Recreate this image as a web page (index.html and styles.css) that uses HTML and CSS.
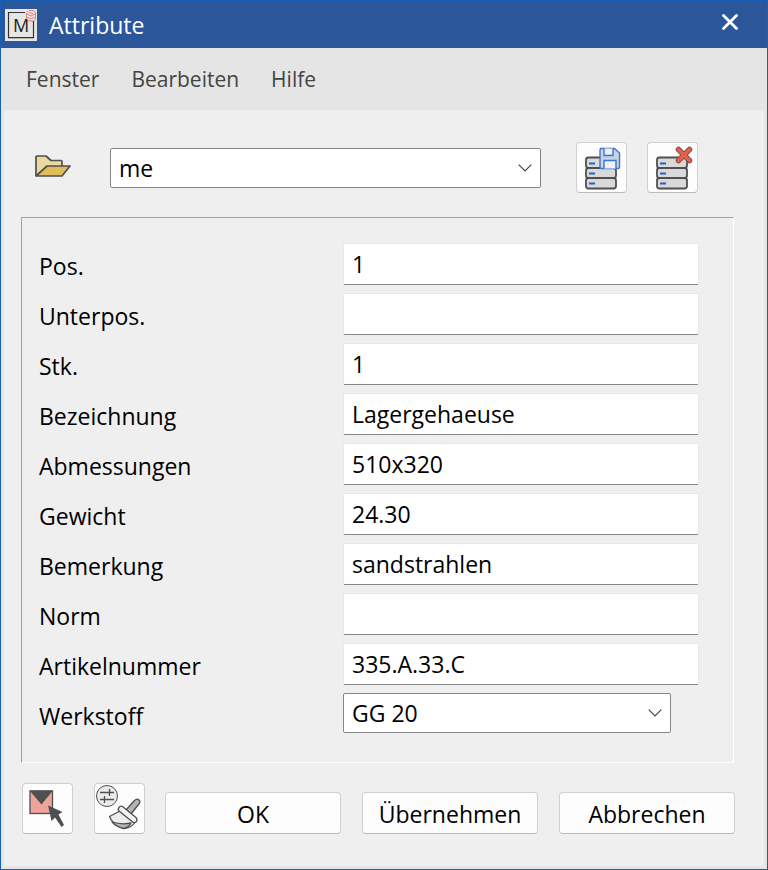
FILE: index.html
```html
<!DOCTYPE html>
<html lang="de">
<head>
<meta charset="utf-8">
<meta name="viewport" content="width=device-width, initial-scale=1">
<title>Attribute</title>
<link rel="stylesheet" href="styles.css">
</head>
<body>
<div class="window">
  <header class="titlebar">
    <svg class="app-icon" viewBox="0 0 32 32" aria-hidden="true">
      <rect width="32" height="32" fill="#e6e6e4"/>
      <path d="M3 29.500H29" stroke="#b5b5b3" stroke-width="1"/>
      <path d="M20 3.500H3.500V28.500H28.500V12" fill="none" stroke="#333" stroke-width="1.200"/>
      <text class="app-letter" x="16" y="23" text-anchor="middle">M</text>
      <path d="M21.500 4 24 1.500H28.500L30.500 4V10L28.500 12H24L21.500 10ZM22 5l4 2 4-2M22 8l4 2 4-2M24 3.500l4 1" fill="none" stroke="#df7777" stroke-width="0.900"/>
    </svg>
    <h1 class="title">Attribute</h1>
    <button class="close" type="button" aria-label="Schließen">
      <svg viewBox="0 0 16 16" width="16" height="16"><path d="M1.500 1.500 14.500 14.500M14.500 1.500 1.500 14.500" stroke="#fff" stroke-width="2.800" stroke-linecap="round"/></svg>
    </button>
  </header>
  <nav class="menubar">
    <button type="button">Fenster</button>
    <button type="button">Bearbeiten</button>
    <button type="button">Hilfe</button>
  </nav>
  <form class="content">
    <div class="toolbar">
      <button class="folder" type="button" aria-label="Öffnen">
        <svg viewBox="0 0 38 24" width="38" height="24" stroke="#4d4f50" stroke-width="1.700" stroke-linejoin="round">
          <path d="M2 21V3Q2 2 3 2H12L17 6.500H27Q28 6.500 28 7.500V13L26 21Z" fill="#ecd99f"/>
          <path d="M2 22 13 12H36L28 22Z" fill="#e0bd5c"/>
        </svg>
      </button>
      <div class="combo combo-set">
        <select aria-label="Attributsatz"><option>me</option></select>
        <svg class="chevron" viewBox="0 0 14 8" aria-hidden="true"><path d="M.7.7 7 7 13.300.7"/></svg>
      </div>
      <button class="icon-btn" type="button" aria-label="Speichern">
        <svg viewBox="0 0 49 49">
          <g fill="#d9d9d9" stroke="#4f4f4f" stroke-width="1.800">
            <rect x="9" y="14.500" width="30" height="10.500" rx="2.500"/><rect x="9" y="25" width="30" height="10" rx="2.500"/><rect x="9" y="35" width="30" height="10.500" rx="2.500"/>
          </g>
          <path d="M12 20.500h6M12 30.500h6M12 40.500h6" stroke="#2463c4" stroke-width="1.800"/>
          <g stroke="#3d74cf" stroke-width="1.400">
            <path d="M23.500 5.500H37.500L42.500 10V24Q42.500 25.500 41 25.500H24.500Q23 25.500 23 24V7Z" fill="#c8d3e4"/>
            <path d="M27 5.500V12.500H36V5.500M27 25.500V17.500H39V25.500" fill="#eef0f3"/>
          </g>
        </svg>
      </button>
      <button class="icon-btn" type="button" aria-label="Löschen">
        <svg viewBox="0 0 49 49">
          <g fill="#d9d9d9" stroke="#4f4f4f" stroke-width="1.800">
            <rect x="9" y="14.500" width="30" height="10.500" rx="2.500"/><rect x="9" y="25" width="30" height="10" rx="2.500"/><rect x="9" y="35" width="30" height="10.500" rx="2.500"/>
          </g>
          <path d="M12 20.500h6M12 30.500h6M12 40.500h6" stroke="#2463c4" stroke-width="1.800"/>
          <path d="M30.500 6.500 41.500 17.500M41.500 6.500 30.500 17.500" stroke="#8d4a43" stroke-width="5.500" stroke-linecap="round"/>
          <path d="M30.500 6.500 41.500 17.500M41.500 6.500 30.500 17.500" stroke="#e3614f" stroke-width="3.600" stroke-linecap="round"/>
        </svg>
      </button>
    </div>

    <div class="group">
      <div class="row"><label for="pos">Pos.</label><input id="pos" type="text" value="1"></div>
      <div class="row"><label for="unterpos">Unterpos.</label><input id="unterpos" type="text"></div>
      <div class="row"><label for="stk">Stk.</label><input id="stk" type="text" value="1"></div>
      <div class="row"><label for="bez">Bezeichnung</label><input id="bez" type="text" value="Lagergehaeuse"></div>
      <div class="row"><label for="abm">Abmessungen</label><input id="abm" type="text" value="510x320"></div>
      <div class="row"><label for="gew">Gewicht</label><input id="gew" type="text" value="24.30"></div>
      <div class="row"><label for="bem">Bemerkung</label><input id="bem" type="text" value="sandstrahlen"></div>
      <div class="row"><label for="norm">Norm</label><input id="norm" type="text"></div>
      <div class="row"><label for="art">Artikelnummer</label><input id="art" type="text" value="335.A.33.C"></div>
      <div class="row"><label for="werk">Werkstoff</label>
        <div class="combo combo-field">
          <select id="werk"><option>GG 20</option></select>
          <svg class="chevron" viewBox="0 0 14 8" aria-hidden="true"><path d="M.7.7 7 7 13.300.7"/></svg>
        </div>
      </div>
    </div>

    <div class="footer">
      <button class="icon-btn" type="button" aria-label="Auswählen">
        <svg viewBox="0 0 49 49">
          <rect x="7" y="7" width="22.500" height="22.500" fill="#efa49b" stroke="#4d4f50" stroke-width="1.300"/>
          <path d="M6.500 6.500H30L18.500 20.500Z" fill="#4d4f50"/>
          <path d="M25 21.500 39.500 28 35.500 30.500 41 41 38.500 43 32 33.500 28.500 37Z" fill="#4d4f50"/>
        </svg>
      </button>
      <button class="icon-btn" type="button" aria-label="Formatieren">
        <svg viewBox="0 0 49 49" fill="none" stroke="#4d4f50" stroke-width="1.300" stroke-linejoin="round">
          <circle cx="12" cy="12" r="10.500" fill="#ebebeb" stroke-width="1"/>
          <path d="M5 8.500H19M5 15.500H19M14.500 5V12M9.500 12V19"/>
          <path d="M31 26 39.500 16.500Q42 14 44 16Q46 18 43.500 20.500L36 30Z" fill="#b5b5b5"/>
          <path d="M25 27 14.500 32.500Q17 40 28.500 44.500Q37 44 41 37Z" fill="#ededed"/>
          <path d="M17 38Q27 41 36 39Q34 43 28.500 44.500Q21 42.500 17 38Z" fill="#b5b5b5"/>
          <path d="M27.500 22.500 41 33.500Q43 36 41 38Q39 39.500 37 37.500L24 27Q22.500 25 24 23.500Q25.500 21.500 27.500 22.500Z" fill="#f3f3f3"/>
        </svg>
      </button>
      <button class="push" type="submit">OK</button>
      <button class="push" type="button">Übernehmen</button>
      <button class="push" type="button">Abbrechen</button>
    </div>
  </form>
</div>
</body>
</html>
```
FILE: styles.css
```css
* { box-sizing: border-box; }

body {
  margin: 0;
  background: #e5e5e5;
  color: #000;
  font: 23px/30px "Open Sans", "Noto Sans", sans-serif;
}

button, input, select { font: inherit; color: inherit; }
button { padding: 0; }
svg { display: block; }

.window {
  display: flex;
  flex-direction: column;
  min-height: 100vh;
  border: 1px solid #1560b8;
  background: #e5e5e5;
}

.titlebar {
  display: flex;
  align-items: center;
  height: 47px;
  padding: 0 29px 0 4px;
  background: #2b579a;
  color: #fff;
}

.app-icon { width: 32px; height: 32px; }
.app-letter { font: 18px "Open Sans", sans-serif; fill: #222; }
.title { flex: 1; margin: 0 0 0 12px; font-size: 23px; font-weight: 400; }
.close { padding-bottom: 6px; border: 0; background: none; }

.menubar {
  display: flex;
  gap: 32px;
  height: 62px;
  padding: 0 25px;
  color: #444;
  font-size: 21px;
}
.menubar button { border: 0; background: none; }

.content {
  flex: 1;
  margin: 0 3px 3px;
  padding: 32px 29px 32px 17px;
  background: #efefef;
}

.toolbar {
  display: flex;
  align-items: center;
  padding: 0 37px 0 13px;
}
.folder { padding-bottom: 4px; border: 0; background: none; }

.combo { position: relative; }
.combo-set { flex: 1; margin: 0 35px 0 38px; }
.combo select {
  display: block;
  width: 100%;
  height: 40px;
  padding: 0 36px 0 8px;
  border: 1px solid #868686;
  border-radius: 2px;
  background: #fff;
  appearance: none;
}
.chevron {
  position: absolute;
  top: 16px;
  right: 9px;
  width: 14px;
  height: 8px;
  fill: none;
  stroke: #444;
  stroke-width: 1.2;
  pointer-events: none;
}

.icon-btn, .push {
  border: 1px solid #d0d0d0;
  border-bottom-color: #bababa;
  border-radius: 4px;
  background: #fdfdfd;
}
.icon-btn { flex: none; width: 51px; height: 51px; }
.icon-btn + .icon-btn { margin-left: 20px; }

.group {
  display: grid;
  gap: 8px;
  margin: 24px 1px 0 0;
  padding: 25px 34px 27px 17px;
  border: 1px solid #a0a0a0;
  border-right-color: #fff;
  border-bottom-color: #fff;
}
.row {
  display: grid;
  grid-template-columns: 304px 1fr;
  height: 42px;
}
.row label { padding-top: 8px; }
.row input {
  width: 100%;
  padding: 0 8px;
  border: 1px solid #e8e8e8;
  border-bottom-color: #868686;
  border-radius: 2px;
  background: #fff;
}
.combo-field { margin-right: 28px; }

.footer {
  display: flex;
  align-items: flex-end;
  margin-top: 20px;
  padding-left: 1px;
}
.footer .icon-btn + .icon-btn { margin-left: 21px; }
.push { flex: 1; height: 42px; padding-top: 2px; margin-left: 20px; }
.push + .push { margin-left: 21px; }
```
